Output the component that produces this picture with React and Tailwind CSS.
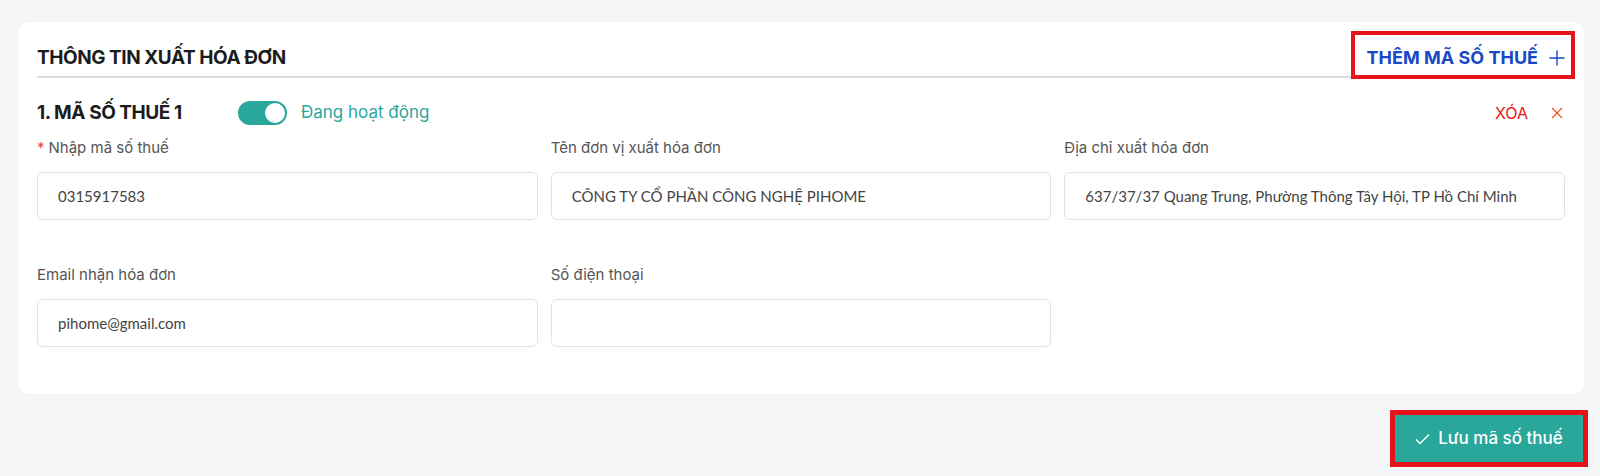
import React from "react";

const Field = ({ label, value, required }) => (
  <div className="flex flex-col">
    <div className="h-[20px] text-[15px] leading-[20px] text-[#555]">
      {required && <span className="text-[#e5484d] mr-[4px]">*</span>}
      {label}
    </div>
    <div className="mt-[14px] h-[48px] rounded-[6px] border border-[#e2e3e8] bg-white flex items-center pl-[20px] text-[15px] text-[#444] font-['Lato',sans-serif]">
      {value}
    </div>
  </div>
);

export default function App() {
  return (
    <div className="w-[1600px] h-[476px] bg-[#f4f5f7] pt-[22px] font-['Inter',sans-serif] overflow-hidden">
      <div className="ml-[18px] mr-[16px] bg-white rounded-[12px] px-[19px] pb-[47px]">
        {/* header */}
        <div className="h-[56px] flex items-end justify-between pb-[5px] border-b-2 border-[#dcdde2]">
          <div className="text-[19px] leading-[26px] font-bold text-[#1c1c1c] tracking-[-0.45px]">
            THÔNG TIN XUẤT HÓA ĐƠN
          </div>
          <div className="relative flex items-center">
            <span className="text-[18px] leading-[26px] font-bold text-[#1948c6]">THÊM MÃ SỐ THUẾ</span>
            <svg width="16" height="16" viewBox="0 0 16 16" className="ml-[11px]" fill="none" stroke="#1948c6" strokeWidth="1.4">
              <path d="M8 0.5V15.5M0.5 8H15.5" />
            </svg>
            <span className="absolute left-[-16px] right-[-10px] top-[-14px] bottom-[-8px] border-[4px] border-[#e5141b]" />
          </div>
        </div>

        {/* tax row */}
        <div className="mt-[23px] h-[24px] flex items-center justify-between">
          <div className="flex items-center">
            <div className="w-[201px] text-[19px] font-bold text-[#1c1c1c] tracking-[-0.45px]">1. MÃ SỐ THUẾ 1</div>
            <div className="w-[49px] h-[24px] rounded-full bg-[#2aa79b] flex items-center justify-end pr-[2px]">
              <div className="w-[20px] h-[20px] rounded-full bg-white" />
            </div>
            <div className="ml-[14px] text-[17px] text-[#2aa79b]">Đang hoạt động</div>
          </div>
          <div className="flex items-center">
            <span className="text-[16px] text-[#e8170f]">XÓA</span>
            <svg width="12" height="12" viewBox="0 0 12 12" className="ml-[23px] mr-[2px]" fill="none" stroke="#f0552a" strokeWidth="1.3">
              <path d="M1 1L11 11M11 1L1 11" />
            </svg>
          </div>
        </div>

        {/* fields */}
        <div className="mt-[13px] grid grid-cols-3 gap-x-[13px] gap-y-[45px]">
          <Field required label="Nhập mã số thuế" value="0315917583" />
          <Field label="Tên đơn vị xuất hóa đơn" value="CÔNG TY CỔ PHẦN CÔNG NGHỆ PIHOME" />
          <Field label="Địa chỉ xuất hóa đơn" value="637/37/37 Quang Trung, Phường Thông Tây Hội, TP Hồ Chí Minh" />
          <Field label="Email nhận hóa đơn" value="pihome@gmail.com" />
          <Field label="Số điện thoại" value="" />
        </div>
      </div>

      {/* save */}
      <div className="mt-[16px] flex justify-end pr-[12px]">
        <div className="border-[5px] border-[#e5141b]">
          <button className="w-[188px] h-[47px] bg-[#2aa79b] flex items-center justify-center text-white text-[17px] font-medium">
            <svg width="15" height="12" viewBox="0 0 15 12" fill="none" stroke="white" strokeWidth="1.5" className="mr-[8px]">
              <path d="M1 6.5L5 10.5L14 1.5" />
            </svg>
            Lưu mã số thuế
          </button>
        </div>
      </div>
    </div>
  );
}
